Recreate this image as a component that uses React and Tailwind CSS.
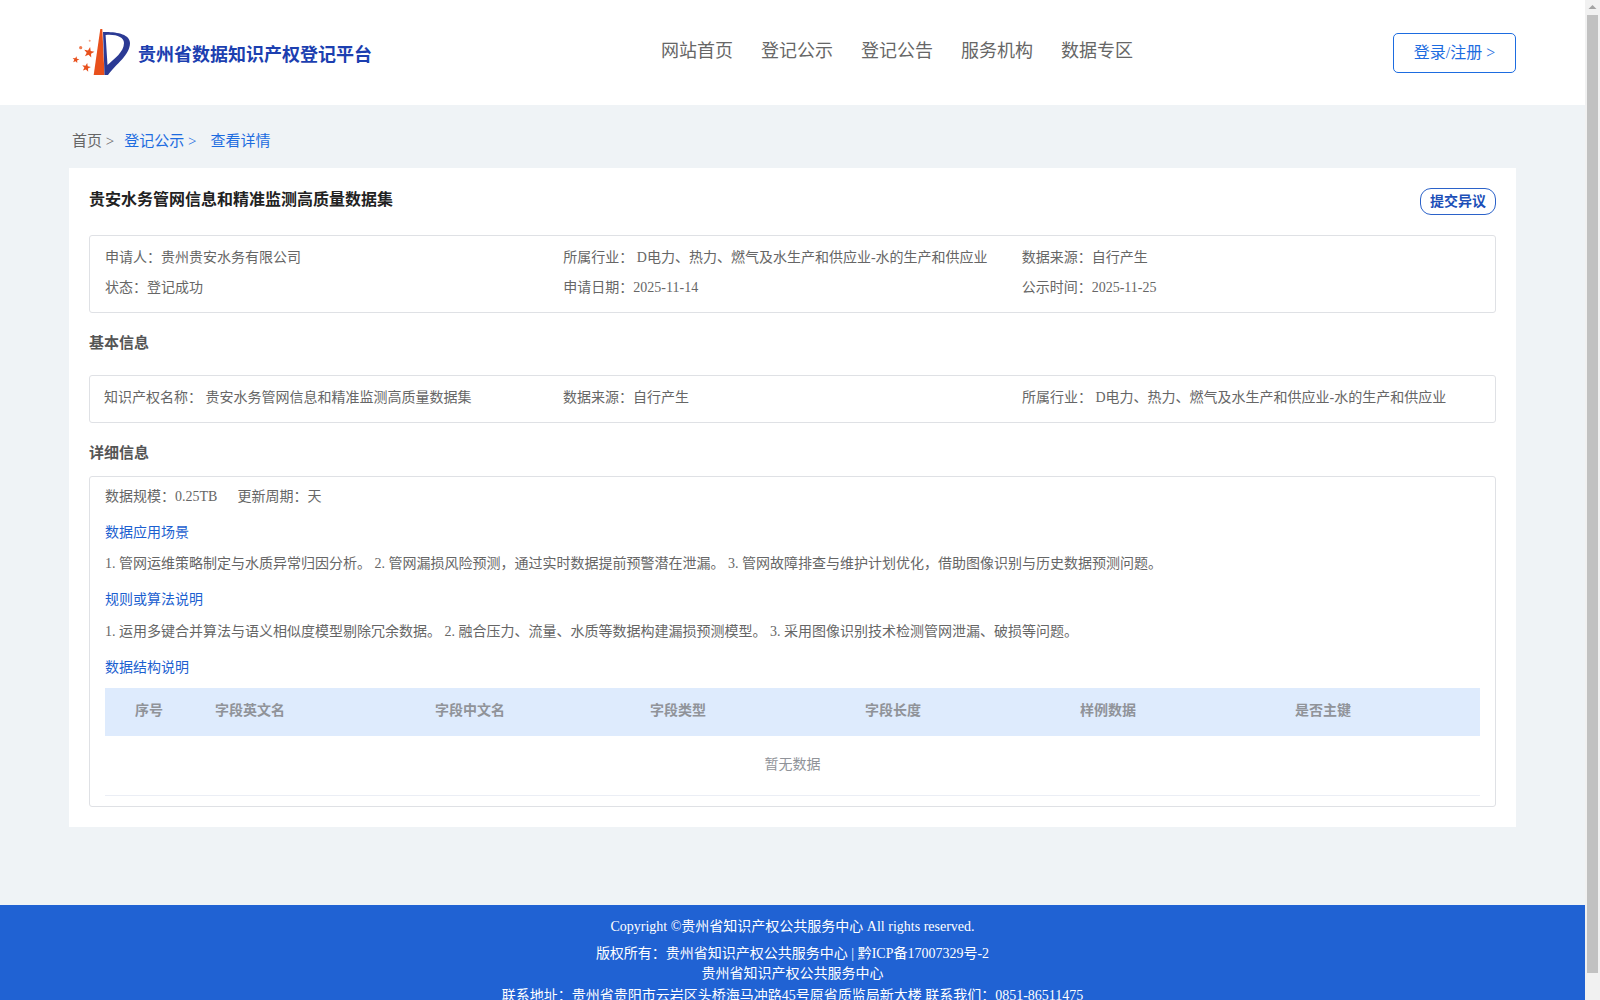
const serif = "font-['Liberation_Serif','Noto_Sans_CJK_SC',serif]";

function Star({ x, y, r, fill = "#e8501c" }) {
  const pts = [];
  for (let i = 0; i < 10; i++) {
    const rad = i % 2 === 0 ? r : r * 0.42;
    const a = -Math.PI / 2 + 0.2 + (i * Math.PI) / 5;
    pts.push((x + rad * Math.cos(a)).toFixed(2) + "," + (y + rad * Math.sin(a)).toFixed(2));
  }
  return <polygon points={pts.join(" ")} fill={fill} />;
}

function Logo() {
  return (
    <svg width="60" height="50" viewBox="0 0 60 50" className="shrink-0">
      <path d="M28.300 1H30.300L32.500 47H21.700z" fill="#e8501c" />
      <path
        fillRule="evenodd"
        d="M31 4C44 3.500 58 6 58 15C58 27 44 36 36 47H32.500zM33.600 7L35.500 37C42 31 52 24 52 15C52 9 44 6 33.600 7z"
        fill="#2b3a94"
      />
      <Star x={17} y={24.5} r={5.5} />
      <Star x={3.8} y={31.7} r={3.6} />
      <Star x={14.3} y={39.5} r={4.6} />
      <circle cx="8.700" cy="19.700" r="1.600" fill="#ee7a50" />
      <circle cx="17.700" cy="12.700" r="1" fill="#f3a184" />
    </svg>
  );
}

function Panel({ className, children }) {
  return <div className={"border border-[#dfe1e5] rounded-[3px] " + className}>{children}</div>;
}

function App() {
  const columns = ["字段英文名", "字段中文名", "字段类型", "字段长度", "样例数据", "是否主键"];
  return (
    <div className={"flex h-screen overflow-hidden bg-[#eff3f6] text-[14px] text-[#666] " + serif}>
      <div className="flex-1 min-w-0 flex flex-col">
        <header className="h-[105px] shrink-0 bg-white flex items-center pl-[72px] pr-[69px]">
          <div className="w-[589px] flex items-center gap-[6px]">
            <Logo />
            <span className="text-[18px] font-bold text-[#1c3fb0] mt-[5px]">贵州省数据知识产权登记平台</span>
          </div>
          <nav className="flex gap-[28px] text-[18px] text-[#666] -mt-[2px]">
            <a>网站首页</a>
            <a>登记公示</a>
            <a>登记公告</a>
            <a>服务机构</a>
            <a>数据专区</a>
          </nav>
          <button className="ml-auto w-[123px] h-[40px] border border-[#1d6ce0] rounded-[5px] text-[16px] text-[#1d6ce0]">
            登录/注册 &gt;
          </button>
        </header>

        <main className="flex-1 min-h-0 px-[69px]">
          <div className="h-[63px] flex items-center pl-[3px] pt-[9px] text-[15px]">
            <span>首页 &gt;</span>
            <span className="ml-[10px] text-[#1d6ce0]">登记公示 &gt;</span>
            <span className="ml-[14px] text-[#1d6ce0]">查看详情</span>
          </div>

          <section className="h-[659px] bg-white px-[20px]">
            <div className="h-[67px] flex justify-between items-start pt-[20px]">
              <h1 className="text-[16px] leading-[24px] font-bold text-[#222]">贵安水务管网信息和精准监测高质量数据集</h1>
              <button className="w-[76px] h-[27px] border border-[#2b62c9] rounded-[11px] text-[14px] font-bold text-[#1c4fb8]">
                提交异议
              </button>
            </div>

            <Panel className="h-[78px] px-[15px] pt-[7px] grid grid-cols-3 content-start">
              <div className="h-[30px] leading-[30px]">申请人：贵州贵安水务有限公司</div>
              <div className="h-[30px] leading-[30px]">所属行业： D电力、热力、燃气及水生产和供应业-水的生产和供应业</div>
              <div className="h-[30px] leading-[30px]">数据来源：自行产生</div>
              <div className="h-[30px] leading-[30px]">状态：登记成功</div>
              <div className="h-[30px] leading-[30px]">申请日期：2025-11-14</div>
              <div className="h-[30px] leading-[30px]">公示时间：2025-11-25</div>
            </Panel>

            <h2 className="h-[62px] pt-[19px] leading-[22px] text-[15px] font-bold text-[#555]">基本信息</h2>

            <Panel className="h-[48px] px-[14px] pb-[3px] grid grid-cols-3 items-center">
              <div>知识产权名称： 贵安水务管网信息和精准监测高质量数据集</div>
              <div>数据来源：自行产生</div>
              <div>所属行业： D电力、热力、燃气及水生产和供应业-水的生产和供应业</div>
            </Panel>

            <h2 className="h-[53px] pt-[19px] leading-[22px] text-[15px] font-bold text-[#555]">详细信息</h2>

            <Panel className="h-[331px] px-[15px] pt-[9px]">
              <div className="h-[22px] leading-[22px] flex gap-[20px]">
                <span>数据规模：0.25TB</span>
                <span>更新周期：天</span>
              </div>
              <h3 className="mt-[14px] h-[22px] leading-[22px] text-[#1c5fd0]">数据应用场景</h3>
              <p className="mt-[9px] h-[22px] leading-[22px]">
                1. 管网运维策略制定与水质异常归因分析。 2. 管网漏损风险预测，通过实时数据提前预警潜在泄漏。 3. 管网故障排查与维护计划优化，借助图像识别与历史数据预测问题。
              </p>
              <h3 className="mt-[14px] h-[22px] leading-[22px] text-[#1c5fd0]">规则或算法说明</h3>
              <p className="mt-[10px] h-[22px] leading-[22px]">
                1. 运用多键合并算法与语义相似度模型剔除冗余数据。 2. 融合压力、流量、水质等数据构建漏损预测模型。 3. 采用图像识别技术检测管网泄漏、破损等问题。
              </p>
              <h3 className="mt-[14px] h-[22px] leading-[22px] text-[#1c5fd0]">数据结构说明</h3>

              <div className="mt-[9px] border-b border-[#ebeef5]">
                <div className="h-[48px] pb-[3px] bg-[#deebfd] grid grid-cols-[110px_220px_repeat(5,215px)] items-center font-bold text-[#909399]">
                  <div className="pl-[30px]">序号</div>
                  {columns.map((c) => (
                    <div key={c}>{c}</div>
                  ))}
                </div>
                <div className="h-[59px] pb-[2px] flex items-center justify-center text-[#909399]">暂无数据</div>
              </div>
            </Panel>
          </section>

          <div className="h-[78px]" />
        </main>

        <footer className="h-[95px] shrink-0 overflow-hidden bg-[#2062d3] text-white text-center pt-[11px]">
          <p className="h-[22px] leading-[22px]">Copyright ©贵州省知识产权公共服务中心 All rights reserved.</p>
          <p className="mt-[5px] h-[20px] leading-[21px]">版权所有：贵州省知识产权公共服务中心 | 黔ICP备17007329号-2</p>
          <p className="h-[22px] leading-[21px]">贵州省知识产权公共服务中心</p>
          <p className="h-[21px] leading-[21px]">联系地址：贵州省贵阳市云岩区头桥海马冲路45号原省质监局新大楼 联系我们：0851-86511475</p>
        </footer>
      </div>

      {/* fake page scrollbar, headless shots don't draw the real one */}
      <div className="w-[15px] shrink-0 bg-[#f1f1f1] flex flex-col items-center">
        <svg width="15" height="15" viewBox="0 0 15 15" className="shrink-0">
          <path d="M7.500 5l4 4h-8z" fill="#a3a3a3" />
        </svg>
        <div className="w-[11px] h-[958px] bg-[#c1c1c1]" />
      </div>
    </div>
  );
}

export default App;
